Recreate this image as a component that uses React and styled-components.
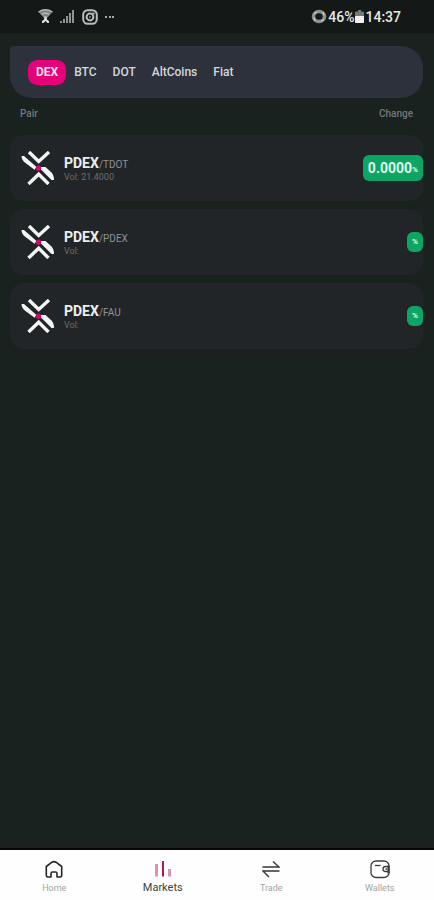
import React, { useState } from "react";
import styled, { createGlobalStyle } from "styled-components";

const GlobalStyle = createGlobalStyle`
  * { box-sizing: border-box; }
  body { margin: 0; background: #1a2220; font-family: Roboto, sans-serif; }
  button { font: inherit; border: 0; cursor: pointer; }
`;

const Screen = styled.div`
  display: flex;
  flex-direction: column;
  min-height: 100vh;
  background: #1a2220;
`;

const StatusBar = styled.header`
  display: flex;
  align-items: center;
  justify-content: space-between;
  height: 33px;
  padding: 0 33px 0 38px;
  background: #141918;
  color: #e6e8e7;
`;

const StatusGroup = styled.div`
  display: flex;
  align-items: center;
  gap: ${(p) => p.$gap}px;
  font-size: 14px;
  font-weight: 500;
`;

const Main = styled.main`
  flex: 1;
  padding: 13px 11px 0 10px;
`;

const TabBar = styled.nav`
  display: flex;
  align-items: center;
  height: 52px;
  padding: 0 18px;
  border-radius: 4px 22px 22px 22px;
  background: #2d313b;
`;

const Tab = styled.button`
  height: 25px;
  padding: 0 8px;
  border-radius: 9px;
  background: ${(p) => (p.$active ? "#e6007a" : "transparent")};
  color: ${(p) => (p.$active ? "#fbe3f0" : "#d5d7dc")};
  font-size: 12px;
  font-weight: ${(p) => (p.$active ? 700 : 500)};
`;

const ListHeader = styled.div`
  display: flex;
  justify-content: space-between;
  padding: 9px 10px 14px;
  color: #737877;
  font-size: 10px;
  line-height: 14px;
  font-weight: 500;
`;

const MarketList = styled.ul`
  display: flex;
  flex-direction: column;
  gap: 8px;
  margin: 0;
  padding: 0;
  list-style: none;
`;

const MarketCard = styled.li`
  display: flex;
  align-items: center;
  height: 66px;
  padding-left: 11px;
  border-radius: 14px;
  background: #212528;
`;

const PairInfo = styled.div`
  flex: 1;
  margin-left: 9px;
  padding-top: 2px;
`;

const PairName = styled.div`
  color: #8d9193;
  font-size: 10px;
  line-height: 14px;
`;

const Base = styled.strong`
  color: #eceeee;
  font-size: 14px;
  font-weight: 700;
`;

const Volume = styled.div`
  color: #6a6e70;
  font-size: 9px;
  line-height: 11px;
`;

const ChangeBadge = styled.span`
  display: flex;
  align-items: center;
  justify-content: center;
  height: ${(p) => (p.$filled ? 26 : 20)}px;
  padding: 0 5px;
  border-radius: 6px;
  background: #0ca564;
  color: #e0f6e9;
  font-size: 14px;
  font-weight: 700;
`;

const Percent = styled.span`
  font-size: 8px;
  line-height: 10px;
  padding-top: ${(p) => (p.$filled ? 3 : 0)}px;
`;

const BottomNav = styled.nav`
  display: grid;
  grid-template-columns: repeat(4, 1fr);
  height: 52px;
  border-top: 2px solid #070909;
  background: #fdfefd;
`;

const NavButton = styled.button`
  display: flex;
  flex-direction: column;
  align-items: center;
  gap: 2px;
  padding: 10px 0 0;
  background: transparent;
  color: ${(p) => (p.$active ? "#3f4141" : "#a2a4a3")};
  font-size: ${(p) => (p.$active ? 11 : 9)}px;
  line-height: 14px;
`;

const WifiIcon = () => (
  <svg width="15" height="15" viewBox="0 0 15 15" aria-hidden="true">
    <path d="M.5 3Q7.500-1.500 14.500 3L9 9v2H6V9z" fill="#7f8381" />
    <path d="M.5 3Q7.500-1.500 14.500 3M3.500 5.500q4-2.500 8 0" fill="none" stroke="#b5b8b6" strokeWidth="1.300" />
    <path d="M6.300 7.500h2.400v3H6.300zM4 14v-2l3.500-2.500L11 12v2H9.500L7.500 12l-2 2z" fill="#dde0de" />
  </svg>
);

const SignalIcon = () => (
  <svg width="15" height="14" viewBox="0 0 15 14" fill="#8f9391" aria-hidden="true">
    <path d="M0 11h2v2H0zM3 9h2v4H3zM6 6h2v7H6zM9 3h2v10H9zM12 0h2v13h-2z" />
  </svg>
);

const CameraIcon = () => (
  <svg width="16" height="16" viewBox="0 0 16 16" fill="none" stroke="#b9bcba" strokeWidth="2" aria-hidden="true">
    <rect x="1.200" y="1.200" width="13.600" height="13.600" rx="4.500" />
    <circle cx="8" cy="8" r="3.400" />
    <path d="M10.500 4.500h2M7.500 8h1" />
  </svg>
);

const MoreIcon = () => (
  <svg width="10" height="4" viewBox="0 0 10 4" fill="#a6aaa8" aria-hidden="true">
    <path d="M0 1h2v2H0zM4 1h2v2H4zM7 1h2v2H7z" />
  </svg>
);

const SaverIcon = () => (
  <svg width="16" height="15" viewBox="0 0 16 15" fill="none" aria-hidden="true">
    <ellipse cx="8" cy="7.500" rx="5.500" ry="5" stroke="#8d918f" strokeWidth="3.600" />
    <path d="M3 4.500 6 3M12 3l1 3.500M13 10.500 10 12M4 12 3 8.500" stroke="#c5c8c6" strokeWidth="1.300" />
  </svg>
);

const BatteryIcon = () => (
  <svg width="9" height="13" viewBox="0 0 9 13" aria-hidden="true">
    <path d="M3 0h3v1.500h2q1 0 1 1V6H0V2.500q0-1 1-1h2z" fill="#747876" />
    <path d="M0 6h9v6q0 1-1 1H1q-1 0-1-1z" fill="#f0f2f1" />
  </svg>
);

const CoinLogo = () => (
  <svg width="34" height="34" viewBox="0 0 34 34" fill="none" aria-hidden="true">
    <g stroke="#f4f5f5" strokeWidth="3.400">
      <path d="M8 1 17.700 10.500 28 1" />
      <path d="M7.500 33 17.700 23.200 27.500 33" />
    </g>
    <g fill="#f4f5f5">
      <path d="M.5 5H3L15.500 16 13.500 18.700 4.500 12Q.5 9 .5 5z" />
      <path d="M20 16H24.500L30.500 21.500Q33 24 33 29H30.500L20 18.500z" />
    </g>
    <circle cx="17.500" cy="17.300" r="2.700" fill="#cf0a6c" />
  </svg>
);

const HomeIcon = () => (
  <svg width="20" height="19" viewBox="0 0 20 19" fill="none" stroke="#242727" strokeWidth="1.600" strokeLinejoin="round" aria-hidden="true">
    <path d="M2.300 6.500 8 2.200Q10 1 12 2.200l5.700 4.300v8.800q0 1.700-1.700 1.700h-3v-3.500q0-1.500-1.500-1.500h-3Q7 12 7 13.500V17H4q-1.700 0-1.700-1.700z" />
  </svg>
);

const MarketsIcon = () => (
  <svg width="18" height="19" viewBox="0 0 18 19" aria-hidden="true">
    <path d="M1 4h3v12.500H1zM14 9h3v7.500h-3z" fill="#dc93b3" />
    <path d="M8 1h2v15.500H8z" fill="#bd1458" />
  </svg>
);

const TradeIcon = () => (
  <svg width="18" height="19" viewBox="0 0 18 19" fill="none" stroke="#333636" strokeWidth="1.400" aria-hidden="true">
    <path d="M.5 7H17L11 1.500M17.500 11H1l6 6" />
  </svg>
);

const WalletIcon = () => (
  <svg width="20" height="19" viewBox="0 0 20 19" fill="none" stroke="#3b3e3e" strokeWidth="1.300" aria-hidden="true">
    <rect x="1" y="1" width="18" height="16.500" rx="5" />
    <path d="M5 5.500h5.500" />
    <path d="M18.500 6.500h-3q-2.500 0-2.500 2.500t2.500 2.500h3M15.500 9h1.500" />
    <path d="M18.500 5.500v8" strokeWidth="2.200" />
  </svg>
);

const tabs = ["DEX", "BTC", "DOT", "AltCoins", "Fiat"];

const markets = [
  { base: "PDEX", quote: "TDOT", volume: "21.4000", change: "0.0000" },
  { base: "PDEX", quote: "PDEX", volume: "", change: "" },
  { base: "PDEX", quote: "FAU", volume: "", change: "" },
];

const destinations = [
  { label: "Home", Icon: HomeIcon },
  { label: "Markets", Icon: MarketsIcon },
  { label: "Trade", Icon: TradeIcon },
  { label: "Wallets", Icon: WalletIcon },
];

export default function App() {
  const [tab, setTab] = useState("DEX");
  const [page, setPage] = useState("Markets");

  return (
    <Screen>
      <GlobalStyle />
      <StatusBar>
        <StatusGroup $gap={7}>
          <WifiIcon />
          <SignalIcon />
          <CameraIcon />
          <MoreIcon />
        </StatusGroup>
        <StatusGroup $gap={1}>
          <SaverIcon />
          <span>46%</span>
          <BatteryIcon />
          <span>14:37</span>
        </StatusGroup>
      </StatusBar>
      <Main>
        <TabBar>
          {tabs.map((name) => (
            <Tab key={name} $active={name === tab} onClick={() => setTab(name)}>
              {name}
            </Tab>
          ))}
        </TabBar>
        <ListHeader>
          <span>Pair</span>
          <span>Change</span>
        </ListHeader>
        <MarketList>
          {markets.map(({ base, quote, volume, change }) => (
            <MarketCard key={quote}>
              <CoinLogo />
              <PairInfo>
                <PairName>
                  <Base>{base}</Base>/{quote}
                </PairName>
                <Volume>Vol: {volume}</Volume>
              </PairInfo>
              <ChangeBadge $filled={change !== ""}>
                {change}
                <Percent $filled={change !== ""}>%</Percent>
              </ChangeBadge>
            </MarketCard>
          ))}
        </MarketList>
      </Main>
      <BottomNav>
        {destinations.map(({ label, Icon }) => (
          <NavButton key={label} $active={label === page} onClick={() => setPage(label)}>
            <Icon />
            {label}
          </NavButton>
        ))}
      </BottomNav>
    </Screen>
  );
}
